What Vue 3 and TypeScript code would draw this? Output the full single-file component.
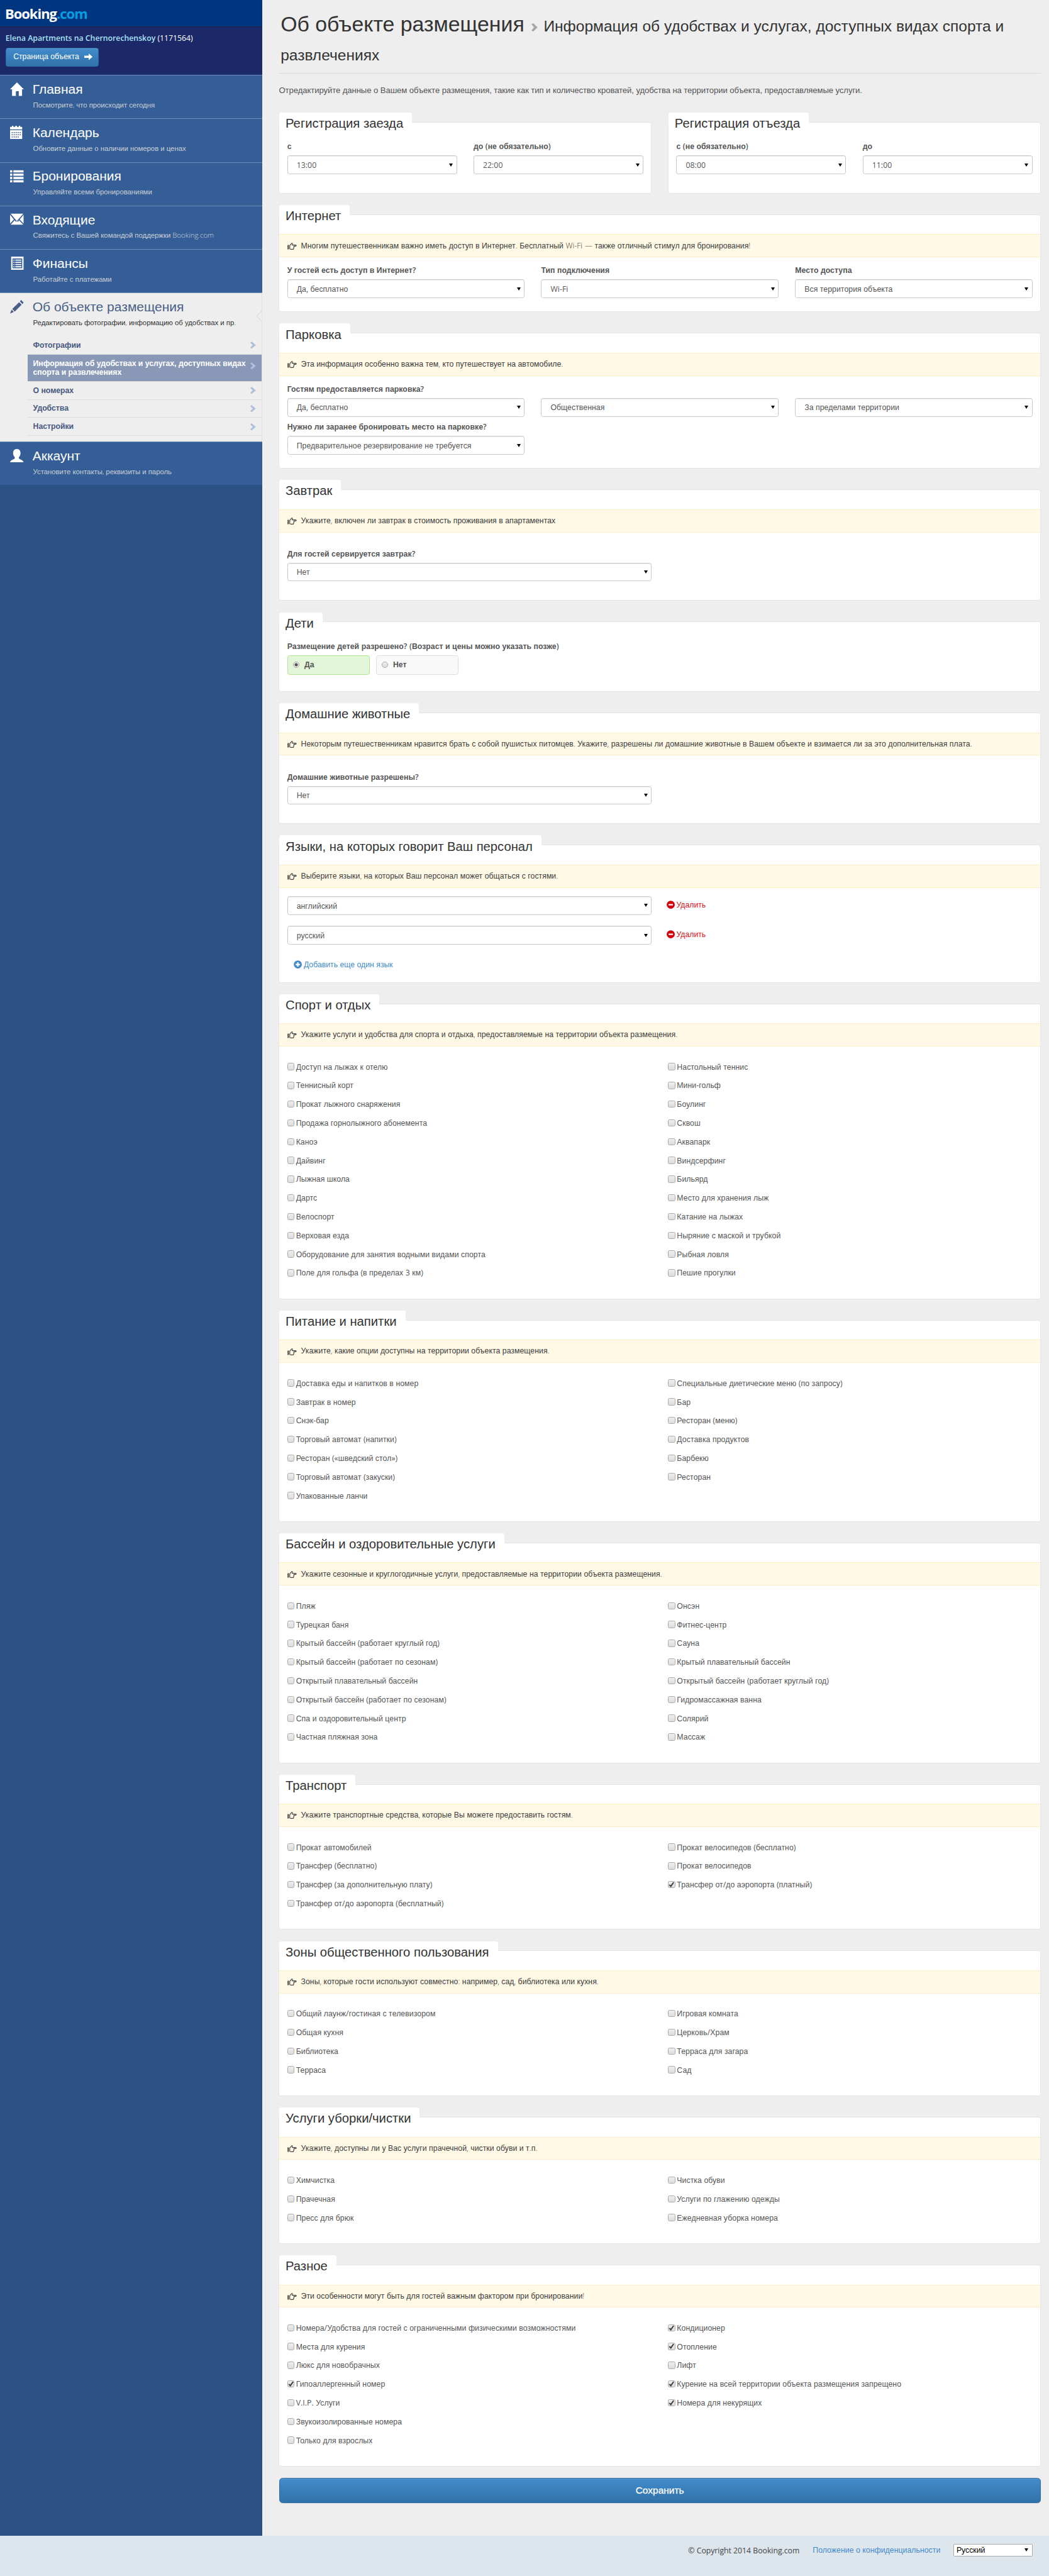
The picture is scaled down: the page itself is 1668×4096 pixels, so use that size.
<script setup lang="ts">
import { h, type FunctionalComponent } from 'vue'

interface Field { label?: string; value: string }
interface Panel {
  title: string
  hint?: string
  kind: 'fields' | 'radio' | 'langs' | 'checks'
  cols?: number
  rows?: Field[][]
  loose?: boolean
  left?: string[]
  right?: string[]
}

/* Cyrillic stays in the base face, Latin letters, digits and punctuation get the Latin face. */
const Txt: FunctionalComponent<{ t: string }> = (props) =>
  props.t
    .split(/([A-Za-z0-9:()?!—.,«»/-]+)/)
    .filter(Boolean)
    .map((s) => (/^[A-Za-z0-9:()?!—.,«»/-]/.test(s) ? h('span', { class: 'latin' }, s) : s))
Txt.props = ['t']

const nav = [
  { icon: 'home', title: 'Главная', sub: 'Посмотрите, что происходит сегодня' },
  { icon: 'calendar', title: 'Календарь', sub: 'Обновите данные о наличии номеров и ценах' },
  { icon: 'list', title: 'Бронирования', sub: 'Управляйте всеми бронированиями' },
  { icon: 'mail', title: 'Входящие', sub: 'Свяжитесь с Вашей командой поддержки Booking.com' },
  { icon: 'sheet', title: 'Финансы', sub: 'Работайте с платежами' },
  { icon: 'pencil', title: 'Об объекте размещения', sub: 'Редактировать фотографии, информацию об удобствах и пр.', active: true },
  { icon: 'user', title: 'Аккаунт', sub: 'Установите контакты, реквизиты и пароль' },
]

const icons: Record<string, string> = {
  home: 'M12.5 0 25 12.5h-3.2V24.5h-6v-8.500h-5.200v8.500h-7V12.500H0z',
  calendar: 'M0 2h3.500V0h2.500v2h3.500V0h3v2h3.500V0h2.500v2H22v4.500H0zM0 8h22v16H0zM3 11.500v1.700h2v-1.700zm3.600 0v1.700h2v-1.700zm3.600 0v1.700h2v-1.700zm3.600 0v1.700h2v-1.700zm3.600 0v1.700h2v-1.700zM3 15.500v1.700h2v-1.700zm3.600 0v1.700h2v-1.700zm3.600 0v1.700h2v-1.700zm3.600 0v1.700h2v-1.700zm3.600 0v1.700h2v-1.700zM3 19.500v1.700h2v-1.700zm3.600 0v1.700h2v-1.700zm3.600 0v1.700h2v-1.700zm3.600 0v1.700h2v-1.700z',
  list: 'M0 2h4v4H0zM6 2h18.500v4H6zM0 8h4v4H0zM6 8h18.500v4H6zM0 14h4v4H0zM6 14h18.500v4H6zM0 20h4v4H0zM6 20h18.500v4H6z',
  mail: 'M1 2h23l-8.200 9.500-3.500 3.800-3.500-3.800zM0 4l7 8.500L0 20zM24.500 4v16l-7-7.500zM1 22l7.500-8 2.200 2.700L12.300 15l1.800 1.700L16.300 14l7.700 8z',
  sheet: 'M2 0h22.500v24H2zM4.500 3.500v17.500H22V3.500zM6 5.500h2v2H6zM9.500 5.500h11v2h-11zM6 9.500h2v2H6zM9.500 9.500h11v2h-11zM6 13.500h2v2H6zM9.500 13.500h11v2h-11zM6 17.300h2v2H6zM9.500 17.300h11v2h-11z',
  pencil: 'M20 0 24.500 4.500 22.500 7.500 17.800 2.600zM16.500 4 21 8.700 8.500 21 4 16.300zM2.800 17.500 6.800 21.800 0 24.500z',
  user: 'M12.300 0c4.400 0 6.700 3 6.700 7.500 0 3.200-1.400 5.800-3 7.300v2.400c1 1.800 8.500 2.600 8.500 7.300H0c0-4.700 7.500-5.500 8.500-7.300v-2.400c-1.600-1.500-3-4.100-3-7.300C5.500 3 8 0 12.300 0z',
}

const sub = [
  'Фотографии',
  'Информация об удобствах и услугах, доступных видах спорта и развлечениях',
  'О номерах',
  'Удобства',
  'Настройки',
]

const times = [
  { title: 'Регистрация заезда', fields: [{ label: 'с', value: '13:00' }, { label: 'до (не обязательно)', value: '22:00' }] },
  { title: 'Регистрация отъезда', fields: [{ label: 'с (не обязательно)', value: '08:00' }, { label: 'до', value: '11:00' }] },
]

const panels: Panel[] = [
  {
    title: 'Интернет', kind: 'fields', cols: 3,
    hint: 'Многим путешественникам важно иметь доступ в Интернет. Бесплатный Wi-Fi — также отличный стимул для бронирования!',
    rows: [[
      { label: 'У гостей есть доступ в Интернет?', value: 'Да, бесплатно' },
      { label: 'Тип подключения', value: 'Wi-Fi' },
      { label: 'Место доступа', value: 'Вся территория объекта' },
    ]],
  },
  {
    title: 'Парковка', kind: 'fields', cols: 3,
    hint: 'Эта информация особенно важна тем, кто путешествует на автомобиле.',
    rows: [
      [
        { label: 'Гостям предоставляется парковка?', value: 'Да, бесплатно' },
        { value: 'Общественная' },
        { value: 'За пределами территории' },
      ],
      [{ label: 'Нужно ли заранее бронировать место на парковке?', value: 'Предварительное резервирование не требуется' }],
    ],
  },
  {
    title: 'Завтрак', kind: 'fields', cols: 2, loose: true,
    hint: 'Укажите, включен ли завтрак в стоимость проживания в апартаментах',
    rows: [[{ label: 'Для гостей сервируется завтрак?', value: 'Нет' }]],
  },
  { title: 'Дети', kind: 'radio' },
  {
    title: 'Домашние животные', kind: 'fields', cols: 2, loose: true,
    hint: 'Некоторым путешественникам нравится брать с собой пушистых питомцев. Укажите, разрешены ли домашние животные в Вашем объекте и взимается ли за это дополнительная плата.',
    rows: [[{ label: 'Домашние животные разрешены?', value: 'Нет' }]],
  },
  {
    title: 'Языки, на которых говорит Ваш персонал', kind: 'langs',
    hint: 'Выберите языки, на которых Ваш персонал может общаться с гостями.',
  },
  {
    title: 'Спорт и отдых', kind: 'checks',
    hint: 'Укажите услуги и удобства для спорта и отдыха, предоставляемые на территории объекта размещения.',
    left: ['Доступ на лыжах к отелю', 'Теннисный корт', 'Прокат лыжного снаряжения', 'Продажа горнолыжного абонемента', 'Каноэ', 'Дайвинг', 'Лыжная школа', 'Дартс', 'Велоспорт', 'Верховая езда', 'Оборудование для занятия водными видами спорта', 'Поле для гольфа (в пределах 3 км)'],
    right: ['Настольный теннис', 'Мини-гольф', 'Боулинг', 'Сквош', 'Аквапарк', 'Виндсерфинг', 'Бильярд', 'Место для хранения лыж', 'Катание на лыжах', 'Ныряние с маской и трубкой', 'Рыбная ловля', 'Пешие прогулки'],
  },
  {
    title: 'Питание и напитки', kind: 'checks',
    hint: 'Укажите, какие опции доступны на территории объекта размещения.',
    left: ['Доставка еды и напитков в номер', 'Завтрак в номер', 'Снэк-бар', 'Торговый автомат (напитки)', 'Ресторан («шведский стол»)', 'Торговый автомат (закуски)', 'Упакованные ланчи'],
    right: ['Специальные диетические меню (по запросу)', 'Бар', 'Ресторан (меню)', 'Доставка продуктов', 'Барбекю', 'Ресторан'],
  },
  {
    title: 'Бассейн и оздоровительные услуги', kind: 'checks',
    hint: 'Укажите сезонные и круглогодичные услуги, предоставляемые на территории объекта размещения.',
    left: ['Пляж', 'Турецкая баня', 'Крытый бассейн (работает круглый год)', 'Крытый бассейн (работает по сезонам)', 'Открытый плавательный бассейн', 'Открытый бассейн (работает по сезонам)', 'Спа и оздоровительный центр', 'Частная пляжная зона'],
    right: ['Онсэн', 'Фитнес-центр', 'Сауна', 'Крытый плавательный бассейн', 'Открытый бассейн (работает круглый год)', 'Гидромассажная ванна', 'Солярий', 'Массаж'],
  },
  {
    title: 'Транспорт', kind: 'checks',
    hint: 'Укажите транспортные средства, которые Вы можете предоставить гостям.',
    left: ['Прокат автомобилей', 'Трансфер (бесплатно)', 'Трансфер (за дополнительную плату)', 'Трансфер от/до аэропорта (бесплатный)'],
    right: ['Прокат велосипедов (бесплатно)', 'Прокат велосипедов', '*Трансфер от/до аэропорта (платный)'],
  },
  {
    title: 'Зоны общественного пользования', kind: 'checks',
    hint: 'Зоны, которые гости используют совместно: например, сад, библиотека или кухня.',
    left: ['Общий лаунж/гостиная с телевизором', 'Общая кухня', 'Библиотека', 'Терраса'],
    right: ['Игровая комната', 'Церковь/Храм', 'Терраса для загара', 'Сад'],
  },
  {
    title: 'Услуги уборки/чистки', kind: 'checks',
    hint: 'Укажите, доступны ли у Вас услуги прачечной, чистки обуви и т.п.',
    left: ['Химчистка', 'Прачечная', 'Пресс для брюк'],
    right: ['Чистка обуви', 'Услуги по глажению одежды', 'Ежедневная уборка номера'],
  },
  {
    title: 'Разное', kind: 'checks',
    hint: 'Эти особенности могут быть для гостей важным фактором при бронировании!',
    left: ['Номера/Удобства для гостей с ограниченными физическими возможностями', 'Места для курения', 'Люкс для новобрачных', '*Гипоаллергенный номер', 'V.I.P. Услуги', 'Звукоизолированные номера', 'Только для взрослых'],
    right: ['*Кондиционер', '*Отопление', 'Лифт', '*Курение на всей территории объекта размещения запрещено', '*Номера для некурящих'],
  },
]

/* A leading asterisk marks an option that is switched on. */
const isOn = (s: string) => s.startsWith('*')
const name = (s: string) => s.replace(/^\*/, '')
</script>

<template>
  <div class="page">
    <div class="body">
      <aside class="side">
        <div class="brand">Booking<span>.com</span></div>
        <div class="prop">
          <div class="prop-name"><b>Elena Apartments na Chernorechenskoy</b> (1171564)</div>
          <a class="btn">Страница объекта
            <svg width="15" height="12" viewBox="0 0 15 12"><path d="M0 4h8V0l7 6-7 6V8H0z" fill="#fff" /></svg>
          </a>
        </div>
        <nav>
          <div v-for="n in nav" :key="n.title" class="item" :class="{ active: n.active }">
            <div class="item-head">
              <svg class="ico" width="25" height="25" viewBox="0 0 25 25"><path :d="icons[n.icon]" fill="currentColor" fill-rule="evenodd" /></svg>
              <div>
                <div class="item-title">{{ n.title }}</div>
                <div class="item-sub"><Txt :t="n.sub" /></div>
              </div>
              <svg v-if="n.active" class="notch" width="11" height="20" viewBox="0 0 11 20"><path d="M11 0 1 10 11 20" fill="#eee" stroke="#dcdcdc" stroke-width="1.2" /></svg>
            </div>
            <ul v-if="n.active" class="sub">
              <li v-for="(s, i) in sub" :key="s" :class="{ on: i === 1 }">
                <span>{{ s }}</span>
                <svg width="10" height="13" viewBox="0 0 10 13"><path d="M0 2.200 2.300 0 10 6.500 2.300 13 0 10.800 4.500 6.500z" fill="#aebfdd" /></svg>
              </li>
            </ul>
          </div>
        </nav>
      </aside>

      <main class="main">
        <h1>Об объекте размещения<svg class="sep" width="11" height="15" viewBox="0 0 11 15"><path d="M0 1.800 3.400 0 11 7.500 3.400 15 0 13.200 4.800 7.500z" fill="#a6a6a6" /></svg><small>Информация об удобствах и услугах, доступных видах спорта и<br>развлечениях</small></h1>
        <p class="intro">Отредактируйте данные о Вашем объекте размещения, такие как тип и количество кроватей, удобства на территории объекта, предоставляемые услуги.</p>

        <div class="pair">
          <section v-for="t in times" :key="t.title" class="panel">
            <h3>{{ t.title }}</h3>
            <div class="fields cols-2 plain">
              <div v-for="f in t.fields" :key="f.label">
                <label><Txt :t="f.label" /></label>
                <div class="select"><Txt :t="f.value" /><i /></div>
              </div>
            </div>
          </section>
        </div>

        <section v-for="p in panels" :key="p.title" class="panel">
          <h3>{{ p.title }}</h3>
          <div v-if="p.hint" class="hint">
            <svg width="17" height="13" viewBox="0 0 17 13">
              <path d="M.3 4h2.400v8H.3z" fill="#444" />
              <path d="M4.300 11.200V5L7.800 1q1.700-.6 1.400 1.400L8.700 4.200H15q1.100.1 1.100 1T15 6.200H11.600q.9 1 0 1.900.6 1-.4 1.900.2 1.900-1.600 1.900H6.600z" fill="none" stroke="#444" stroke-width="1.300" stroke-linejoin="round" />
            </svg>
            <span><Txt :t="p.hint" /></span>
          </div>

          <div v-if="p.kind === 'fields'" class="stack" :class="{ loose: p.loose }">
            <div v-for="(r, i) in p.rows" :key="i" class="fields" :class="'cols-' + p.cols">
              <div v-for="f in r" :key="f.value">
                <label><Txt :t="f.label || '\u00a0'" /></label>
                <div class="select"><Txt :t="f.value" /><i /></div>
              </div>
            </div>
          </div>

          <div v-else-if="p.kind === 'radio'" class="radios">
            <label><Txt t="Размещение детей разрешено? (Возраст и цены можно указать позже)" /></label>
            <div class="radio-row">
              <div class="radio yes"><i class="dot" />Да</div>
              <div class="radio"><i />Нет</div>
            </div>
          </div>

          <div v-else-if="p.kind === 'langs'" class="langs">
            <div v-for="l in ['английский', 'русский']" :key="l" class="lang">
              <div class="select">{{ l }}<i /></div>
              <a class="del">
                <svg width="15" height="15" viewBox="0 0 15 15"><circle cx="7.500" cy="7.500" r="7.300" fill="#d0000b" /><path d="M3.500 6.200h8v2.600h-8z" fill="#fff" /></svg>
                Удалить
              </a>
            </div>
            <a class="add">
              <svg width="15" height="15" viewBox="0 0 15 15"><circle cx="7.500" cy="7.500" r="7.300" fill="#428bca" /><path d="M6.200 3.500h2.600v2.700h2.700v2.600H8.800v2.700H6.200V8.800H3.500V6.200h2.700z" fill="#fff" /></svg>
              Добавить еще один язык
            </a>
          </div>

          <div v-else class="checks">
            <ul v-for="(col, i) in [p.left, p.right]" :key="i">
              <li v-for="o in col" :key="o">
                <span class="box"><svg v-if="isOn(o)" width="11" height="11" viewBox="0 0 11 11"><path d="M1.500 5.500 4.300 8.500 9.500 1" fill="none" stroke="#3c3c3c" stroke-width="2.300" /></svg></span>
                <span><Txt :t="name(o)" /></span>
              </li>
            </ul>
          </div>
        </section>

        <button class="save">Сохранить</button>
      </main>
    </div>

    <footer class="foot">
      <span class="copy">© Copyright 2014 Booking.com</span>
      <a>Положение о конфиденциальности</a>
      <div class="lang-select">Русский<i /></div>
    </footer>
  </div>
</template>

<style>
body { background: #dfe6ec; overflow: hidden; }
.latin { font-family: "Open Sans", "Liberation Sans", sans-serif; font-weight: 400; line-height: 1; }
.hint .latin, .item-sub .latin { font-weight: 300; }
label .latin { font-weight: 600; }
</style>

<style scoped>
* { box-sizing: border-box; }
.page { zoom: 0.87651; width: 1903px; height: 4673px; display: flex; flex-direction: column; background: #eee; font: 14px/20px "Liberation Sans", Arial, sans-serif; color: #555; overflow: hidden; }
.body { display: flex; flex: 1; }
ul { list-style: none; margin: 0; padding: 0; }

.side { width: 476px; flex: none; background: #2c5185; color: #fff; }
.brand { height: 49px; padding-left: 9px; background: #003580; border-bottom: 1px solid #1b2450; font: 700 25px/50px "Open Sans", sans-serif; letter-spacing: -1.1px; }
.brand span { color: #069ee2; }
.prop { height: 87px; padding: 10px 0 0 10px; background: #1b2968; }
.prop-name { font: 400 14px/20px "Open Sans", sans-serif; color: #fff; }
.prop-name b { font-weight: 600; color: #a9e2f6; }
.btn { display: flex; align-items: center; width: 169px; height: 34px; margin-top: 8px; padding-left: 13px; border: 1px solid #2d6ca2; border-radius: 4px; background: linear-gradient(#428bca, #3072ab); color: #fff; box-shadow: inset 0 1px 0 rgba(255, 255, 255, .15); white-space: nowrap; }
.btn svg { margin: -2px 0 0 9px; }
.item { height: 79px; border-top: 1px solid #6c8dbb; background: #355e97; }
.item-head { position: relative; display: flex; height: 78px; padding: 10px 0 0 18px; }
.ico { margin-top: 2px; flex: none; }
.item-title { margin-left: 16px; font-size: 24px; line-height: 30px; white-space: nowrap; }
.item-sub { margin: 4px 0 0 17px; font-size: 13px; line-height: 20px; letter-spacing: -.03px; color: #c9ced6; white-space: nowrap; }
.item.active { height: 270px; background: #eee; color: #4a5f87; border-right: 1px solid #ddd; }
.item.active .item-sub { color: #333; }
.notch { position: absolute; right: -1px; top: 31px; }
.sub { margin-left: 50px; }
.sub li { display: flex; align-items: center; justify-content: space-between; height: 33px; padding: 0 11px 0 10px; border-bottom: 1px solid #ddd; font-weight: 700; line-height: 16px; letter-spacing: -.03px; color: #47597f; }
.sub li.on { height: 49px; background: #8998b6; color: #fff; }
.sub li span { white-space: nowrap; }
.sub li.on span { width: 390px; white-space: normal; }
.sub li.on svg { margin-top: -6px; }

.main { flex: 1; padding: 17px 15px 0 30px; }
h1 { margin: 0; height: 117px; padding-left: 3px; border-bottom: 1px solid #d9d9d9; font-weight: 400; font-size: 38.6px; line-height: 53px; color: #333; white-space: nowrap; }
h1 small { font-size: 28px; line-height: 1; }
.sep { margin: 0 11px 0 13px; vertical-align: baseline; }
.intro { margin: 20px 0 0; height: 67px; font-size: 15px; letter-spacing: -.1px; white-space: nowrap; }
.pair { display: grid; grid-template-columns: 1fr 1fr; gap: 30px; }
.panel { display: flow-root; margin: 1px 1px 40px; background: #fff; border-radius: 4px; box-shadow: 0 0 0 1px #e5e5e5; }
.pair .panel { margin-bottom: 39px; }
.panel h3 { width: fit-content; height: 53px; margin: -18px 0 0; padding: 7px 16px 0 11px; background: #fff; border-radius: 4px 4px 0 0; font-weight: 400; font-size: 23.1px; line-height: 26px; color: #333; white-space: nowrap; }
.hint { display: flex; align-items: center; height: 42px; padding: 1px 0 0 14px; background: #fff9e6; border: solid #fdeecb; border-width: 1px 0; color: #3d3d3d; letter-spacing: .04px; white-space: nowrap; }
.hint svg { margin-right: 8px; }
.fields { display: grid; gap: 30px; padding: 0 14px; }
.fields + .fields { margin-top: 10px; }
.cols-2 { grid-template-columns: 1fr 1fr; }
.cols-3 { grid-template-columns: 1fr 1fr 1fr; }
.plain { padding-bottom: 34px; }
.stack { padding: 15px 0 24px; }
.stack.loose { padding: 30px 0 34px; }
label { display: block; height: 20px; margin-bottom: 5px; font-weight: 700; letter-spacing: .05px; white-space: nowrap; }
.select { position: relative; height: 34px; padding: 2px 6px 0 16px; border: 1px solid #c8c8c8; border-radius: 4px; background: #fff; box-shadow: inset 0 1px 1px rgba(0, 0, 0, .075); line-height: 30px; letter-spacing: .06px; white-space: nowrap; }
.select i, .lang-select i { position: absolute; right: 6px; top: 13px; border: 3.500px solid transparent; border-top: 6px solid #000; border-bottom: 0; }
.radios { padding: 0 14px 29px; }
.radio-row { display: flex; gap: 11px; }
.radio { display: flex; align-items: center; width: 150px; height: 36px; padding-left: 9px; border: 1px solid #ddd; border-radius: 4px; background: #f9f9f9; font-weight: 700; }
.radio.yes { border-color: #b2e68d; background: #e3f6d9; }
.radio i { width: 12px; height: 12px; margin: -2px 9px 0 0; border: 1px solid #aaa; border-radius: 50%; background: linear-gradient(#eee, #dcdcdc); }
.radio i.dot { background: radial-gradient(circle, #555 0 2.500px, #e6e6e6 3.300px); }
.langs { padding: 15px 14px 0; height: 171px; }
.lang { display: grid; grid-template-columns: 661px auto; column-gap: 27px; margin-bottom: 20px; }
.del, .add { display: flex; align-items: center; }
.del svg, .add svg { margin: -3px 3px 0 0; }
.del { color: #d9101a; }
.add { width: fit-content; margin: 27px 0 0 12px; color: #428bca; }
.checks { display: grid; grid-template-columns: 1fr 1fr; column-gap: 30px; padding: 21px 14px 28px; }
.checks li { display: flex; align-items: center; height: 34px; letter-spacing: .07px; white-space: nowrap; }
.box { display: flex; align-items: center; justify-content: center; flex: none; width: 13px; height: 13px; margin: -3px 3px 0 0; border: 1px solid #a9a9a9; border-radius: 3px; background: linear-gradient(#efefef, #dcdcdc); }
.save { display: block; width: 100%; height: 45px; margin-top: -18px; padding: 0; border: 1px solid #2d6ca2; border-radius: 6px; background: linear-gradient(#428bca, #3072ab); box-shadow: inset 0 1px 0 rgba(255, 255, 255, .15), 0 1px 1px rgba(0, 0, 0, .075); color: #fff; font: 400 17.700px "Liberation Sans", sans-serif; -webkit-text-stroke: .3px #fff; }

.foot { display: flex; height: 73px; justify-content: flex-end; padding: 15px 30px 0 0; background: #dde5ed; line-height: 24px; }
.copy { font-family: "Open Sans", sans-serif; color: #444; letter-spacing: -.02px; }
.foot a { margin: 0 24px; color: #428bca; letter-spacing: .05px; }
.lang-select { position: relative; width: 143px; height: 23px; padding-left: 4px; border: 1px solid #a9a9a9; border-radius: 2px; background: #fff; color: #000; line-height: 22px; }
.lang-select i { top: 7px; }
</style>
